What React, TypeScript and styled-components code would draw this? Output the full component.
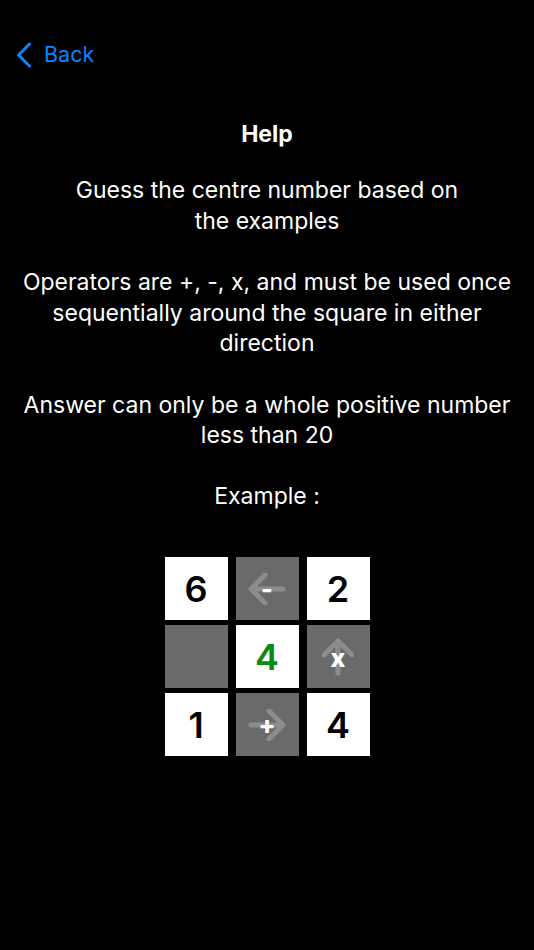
import styled, { createGlobalStyle } from "styled-components";

const GlobalStyle = createGlobalStyle`
  body {
    margin: 0;
    background: #000;
    font-family: "Inter", "Noto Sans", sans-serif;
  }
`;

type Dir = "left" | "right" | "up";

function Arrow({ dir }: { dir: Dir }) {
  const rotate = dir === "left" ? 0 : dir === "right" ? 180 : 90;
  return (
    <ArrowSvg
      width="38"
      height="32"
      viewBox="0 0 38 32"
      style={{ transform: `rotate(${rotate}deg)` }}
    >
      <path
        d="M35 16 H3 M17 2 L3 16 L17 30"
        fill="none"
        stroke="#8c8c8c"
        strokeWidth="5"
        strokeLinecap="round"
        strokeLinejoin="round"
      />
    </ArrowSvg>
  );
}

function OpCell({ dir, op }: { dir: Dir; op: string }) {
  return (
    <Cell $dark>
      <Arrow dir={dir} />
      <Operator $down={dir === "up"}>{op}</Operator>
    </Cell>
  );
}

function App() {
  return (
    <>
      <GlobalStyle />
      <Page>
        <NavBar>
          <svg width="16" height="26" viewBox="0 0 16 26">
            <path
              d="M13.5 2 L2.5 13 L13.5 24"
              fill="none"
              stroke="#0a84ff"
              strokeWidth="3"
              strokeLinecap="round"
              strokeLinejoin="round"
            />
          </svg>
          <BackLabel>Back</BackLabel>
        </NavBar>
        <Title>Help</Title>
        <Body>
          <Para>
            Guess the centre number based on
            <br />
            the examples
          </Para>
          <Para>
            Operators are +, -, x, and must be used once
            <br />
            sequentially around the square in either
            <br />
            direction
          </Para>
          <Para>
            Answer can only be a whole positive number
            <br />
            less than 20
          </Para>
          <Para>Example :</Para>
        </Body>
        <Grid>
          <Cell>6</Cell>
          <OpCell dir="left" op="-" />
          <Cell>2</Cell>
          <Cell $dark />
          <Cell $green>4</Cell>
          <OpCell dir="up" op="x" />
          <Cell>1</Cell>
          <OpCell dir="right" op="+" />
          <Cell>4</Cell>
        </Grid>
      </Page>
    </>
  );
}

const Page = styled.main`
  min-height: 950px;
  background: #000;
  display: flex;
  flex-direction: column;
`;

const NavBar = styled.header`
  display: flex;
  align-items: center;
  gap: 12px;
  height: 44px;
  margin-top: 33px;
  padding-left: 16px;
`;

const BackLabel = styled.span`
  color: #0a84ff;
  font-size: 21.5px;
  line-height: 1;
`;

const Title = styled.h1`
  margin: 42px 0 0;
  color: #fff;
  font-size: 23px;
  font-weight: 700;
  line-height: 31px;
  text-align: center;
`;

const Body = styled.section`
  margin-top: 25px;
  padding: 0 10px;
`;

const Para = styled.p`
  margin: 0 0 30.5px;
  color: #fff;
  font-size: 23px;
  line-height: 30.7px;
  text-align: center;
  &:last-child {
    margin-bottom: 0;
  }
`;

const Grid = styled.div`
  display: grid;
  grid-template-columns: repeat(3, 63px);
  grid-auto-rows: 63px;
  column-gap: 8px;
  row-gap: 5px;
  justify-content: center;
  margin-top: 45px;
`;

const Cell = styled.div<{ $dark?: boolean; $green?: boolean }>`
  position: relative;
  display: flex;
  align-items: center;
  justify-content: center;
  background: ${(p) => (p.$dark ? "#6a6a6a" : "#fff")};
  color: ${(p) => (p.$green ? "#0b8a12" : "#000")};
  font-size: 36px;
  font-weight: 600;
`;

const ArrowSvg = styled.svg`
  display: block;
`;

const Operator = styled.span<{ $down?: boolean }>`
  position: absolute;
  left: 0;
  right: 0;
  top: ${(p) => (p.$down ? "3px" : "0")};
  bottom: 0;
  display: flex;
  align-items: center;
  justify-content: center;
  color: #fff;
  font-size: 25px;
  font-weight: 800;
`;

export default App;
